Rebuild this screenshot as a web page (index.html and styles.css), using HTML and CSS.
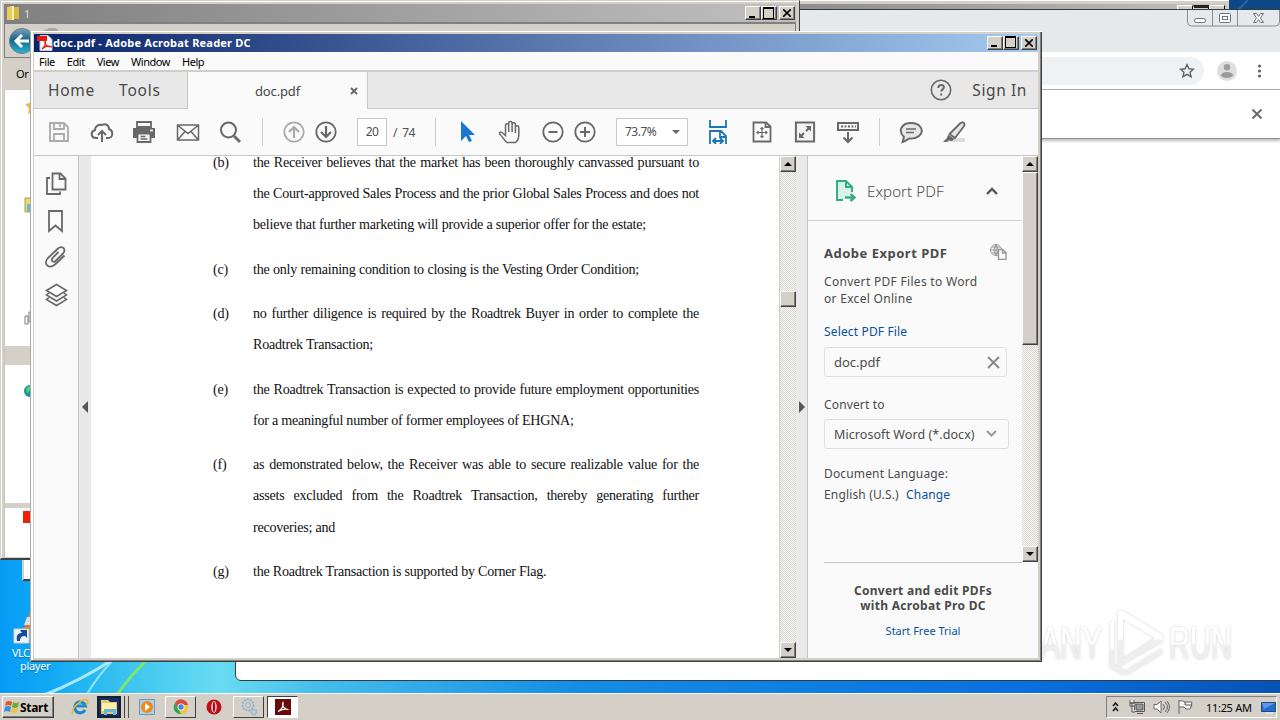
FILE: index.html
```html
<!DOCTYPE html>
<html lang="en">
<head>
<meta charset="utf-8">
<title>doc.pdf - Adobe Acrobat Reader DC</title>
<link rel="stylesheet" href="styles.css">
</head>
<body>
<main class="desktop">
  <svg class="wallpaper" width="1280" height="720" viewBox="0 0 1280 720">
    <defs>
      <linearGradient id="sky"><stop offset="0" stop-color="#069cf6"/><stop offset=".04" stop-color="#12aaf5"/><stop offset=".1" stop-color="#3cc4f0"/><stop offset=".17" stop-color="#68dcf2"/><stop offset=".25" stop-color="#45bdeb"/><stop offset=".45" stop-color="#168ce4"/><stop offset=".8" stop-color="#0870df"/><stop offset="1" stop-color="#0653b5"/></linearGradient>
    </defs>
    <rect width="1280" height="720" fill="url(#sky)"/>
    <path d="M1220 0h60v20h-60z" fill="#0d4785"/><path d="M1234 14l14-14" stroke="#2864a0" stroke-width="2"/>
    <path d="M42 696Q82 680 112 660" fill="none" stroke="#bff2ff" stroke-width="3" opacity=".85"/>
    <path d="M86 696Q96 678 113 660" fill="none" stroke="#a4efff" stroke-width="2" opacity=".8"/>
    <path d="M116 696Q130 676 147 660" fill="none" stroke="#80e862" stroke-width="3"/>
  </svg>

  <section class="small-window"></section>
  <div class="shortcut">
    <svg width="32" height="34" viewBox="0 0 32 34"><path d="M18 0L9 22H32V0z" fill="#c9803c"/><path d="M15 5l-3 8H32V5z" fill="#ddd"/><path d="M2 17h15v14H2z" fill="#eef3f5" stroke="#ccc"/><path d="M5 29c-1-6 1-8 5-8l-2-3h7v8l-2-2c-3 0-5 1-5 5z" fill="#164f99"/></svg>
    <span class="vlc">VLC</span><span class="player">player</span>
  </div>

  <section class="rear-window"><i></i><i></i><i></i></section>
  <section class="browser">
    <header class="browser-top">
      <div class="aero-controls">
        <svg width="93" height="18" viewBox="0 0 93 18" fill="none" stroke="#69737c"><path d="M.5 0v12q0 4 4 4h84q4 0 4-4V0M25.500 0v16M50.500 0v16" stroke="#858d93"/><rect x="7.500" y="8.500" width="11" height="4" rx="2" fill="#fff"/><rect x="32.500" y="3.500" width="11" height="9" rx="1" fill="#fff"/><rect x="35.500" y="6.500" width="5" height="3"/><path d="M66.500 3.500h3l2 3 2-3h3l-3 4.500 3 4.500h-3l-2-3-2 3h-3l3-4.500z" fill="#fff"/></svg>
      </div>
    </header>
    <div class="browser-address"><div class="omnibox"><svg width="16" height="16" viewBox="0 0 16 16"><path d="M8 1.500l1.900 4.300 4.600.4-3.500 3 1.100 4.500L8 11.300l-4.100 2.400L5 9.200l-3.500-3 4.600-.4z" fill="none" stroke="#5f6368" stroke-width="1.400"/></svg></div>
      <svg class="person" width="20" height="20" viewBox="0 0 20 20"><circle cx="10" cy="10" r="10" fill="#dedede"/><circle cx="10" cy="6.300" r="3.200" fill="#9c9c9c"/><ellipse cx="10" cy="14" rx="6" ry="3" fill="#9c9c9c"/></svg>
      <svg width="5" height="16" viewBox="0 0 5 16" fill="#5f6368"><circle cx="2.500" cy="3" r="1.600"/><circle cx="2.500" cy="8" r="1.600"/><circle cx="2.500" cy="13" r="1.600"/></svg>
    </div>
    <div class="infobar"><svg width="12" height="12" viewBox="0 0 12 12"><path d="M1.500 1.500l9 9m0-9l-9 9" stroke="#666" stroke-width="1.800"/></svg></div>
  </section>

  <section class="explorer">
    <header class="explorer-title"><svg width="14" height="16" viewBox="0 0 14 16"><path d="M1 2l5-1v14H1z" fill="#e8ce62"/><path d="M6 1h2v14H6z" fill="#fff2a7"/><path d="M8 2h5v12H8z" fill="#d9b93f"/></svg><span>1</span>
      <div class="controls"><b class="min"></b><b class="max"></b><b class="close"><svg width="8" height="8" viewBox="0 0 8 8"><path d="M0 0l8 8m0-8l-8 8" stroke="#000" stroke-width="1.600"/></svg></b></div>
    </header>
    <div class="explorer-nav"><svg width="52" height="33" viewBox="0 0 52 33"><defs><linearGradient id="nav" x2="0" y2="1"><stop stop-color="#76a7b9"/><stop offset=".45" stop-color="#176487"/><stop offset="1" stop-color="#28b6dd"/></linearGradient></defs><circle cx="46" cy="17" r="13" fill="#a9a59e"/><circle cx="16" cy="17" r="12.500" fill="url(#nav)" stroke="#687f88"/><path d="M23 17H10m6-6l-6 6 6 6" fill="none" stroke="#fff" stroke-width="3"/></svg></div>
    <div class="explorer-command">Or</div>
    <div class="explorer-body">
      <svg width="27" height="465" viewBox="0 0 27 465"><path d="M27 9l-2 4-5 1 4 4-1 6 4-2z" fill="#f2b44a"/><path d="M20 108h7v14h-7z" fill="#ecd971" stroke="#a89d49"/><path d="M22 114h5v7h-5z" fill="#6bb4df"/><path d="M20 226h3v8h-3zM24 222h3v10h-3z" fill="#fff" stroke="#777d88"/><path d="M25 221h2v8h-2z" fill="#35357a"/><path d="M0 256h27v19H0z" fill="#d4d0c8"/><circle cx="25" cy="301" r="6" fill="#168fa4"/><path d="M21 298l4-2v4l-3 4z" fill="#45d56f"/><path d="M0 413h27v5H0z" fill="#d4d0c8"/><path d="M18 421h9v12h-9z" fill="#eb2205"/></svg>
    </div>
  </section>

  <svg class="watermark" width="240" height="80" viewBox="0 0 240 80">
    <defs><linearGradient id="wm" x2="0" y2="1"><stop offset=".5" stop-color="#fff"/><stop offset=".55" stop-color="#ebebeb"/></linearGradient><filter id="soft"><feDropShadow dx="0" dy="0" stdDeviation="1.800" flood-color="#888" flood-opacity=".5"/></filter></defs>
    <g filter="url(#soft)" fill="url(#wm)"><text x="10" y="56" textLength="62" lengthAdjust="spacingAndGlyphs">ANY</text><text x="139" y="56" textLength="63" lengthAdjust="spacingAndGlyphs">RUN</text><path d="M80 20l4-3v45l12 6 35-22q3 3 0 5L98 71q-4 2-8-1l-10-6z"/><path fill-rule="evenodd" d="M88 10q2-4 7-1l36 22q4 4 0 8L90 63l-2-2zM93 16v40l32-21z"/></g>
  </svg>

  <section class="acrobat">
    <header class="acrobat-title"><svg width="17" height="16" viewBox="0 0 17 16"><path d="M4 .5h8l4 4v11H4z" fill="#f4f6fa" stroke="#c5cad4"/><path d="M1 1h10v5H1z" fill="#e21a10"/><path d="M6 14c4-3 4-7 3-8-1 4 3 6 7 6-4-2-7-1-10 2z" fill="none" stroke="#df2519" stroke-width="1.200"/></svg><span>doc.pdf - Adobe Acrobat Reader DC</span>
      <div class="controls"><b class="min"></b><b class="max"></b><b class="close"><svg width="8" height="8" viewBox="0 0 8 8"><path d="M0 0l8 8m0-8l-8 8" stroke="#000" stroke-width="1.600"/></svg></b></div>
    </header>
    <nav class="menu"><span>File</span><span>Edit</span><span>View</span><span>Window</span><span>Help</span></nav>
    <div class="tabs">
      <div class="home"><span>Home</span><span>Tools</span></div>
      <div class="tab"><span>doc.pdf</span><svg width="8" height="8" viewBox="0 0 8 8"><path d="M1 1l6 6m0-6l-6 6" stroke="#666" stroke-width="1.900"/></svg></div>
      <div class="account"><svg width="22" height="22" viewBox="0 0 22 22" fill="none" stroke="#6a6a6a" stroke-width="1.600"><circle cx="11" cy="11" r="9.700"/><path d="M8.300 9q0-3 2.800-3t2.800 2.300c0 2-2.700 2.200-2.700 4.300" stroke-width="2"/><path d="M10.200 14.500h2v2h-2z" fill="#6a6a6a" stroke="none"/></svg><span>Sign In</span></div>
    </div>
    <div class="toolbar">
      <i class="w50"><svg class="pale" viewBox="0 0 24 24"><path d="M3 3h14l4 4v14H3zM7 3v6h10V3M13 4v3M7 21v-7h10v7"/></svg></i>
      <i class="w36"><svg viewBox="0 0 24 24"><path d="M8 18H6c-5 0-6-6-1-8 0-4 4-6 7-5 3-2 7 0 7 4 5 2 4 9-1 9h-2M12 22V11m-4 4l4-4 4 4" stroke-width="2"/></svg></i>
      <i class="w48"><svg viewBox="0 0 24 24"><path d="M5 2h14v5H5z" fill="#fafafa"/><path d="M1 8h22v10H1z" fill="#686868" stroke="none"/><path d="M5.500 13.500h13V22h-13z" fill="#fafafa"/><path d="M8.500 16.500h5M8.500 19h7" stroke-width="1.300"/><path d="M18 10.500h3" stroke="#eee"/></svg></i>
      <i class="w40"><svg viewBox="0 0 24 24"><path d="M1.500 5h21v15h-21zM2 5.500l10 8 10-8M2 19.500l7-8M22 19.500l-7-8" stroke-width="1.500"/></svg></i>
      <i class="w44"><svg viewBox="0 0 24 24"><circle cx="10.500" cy="10" r="7.500" stroke-width="2"/><path d="M16 16l6 6" stroke-width="2.800"/></svg></i>
      <i class="w21 divider"></i>
      <i class="w42"><svg class="pale" viewBox="0 0 24 24"><circle cx="12" cy="12" r="9.700"/><path d="M12 18V7m-5 5l5-5 5 5" stroke-width="2.200"/></svg></i>
      <i class="w22"><svg viewBox="0 0 24 24"><circle cx="12" cy="12" r="9.700"/><path d="M12 6v11m-5-5l5 5 5-5" stroke-width="2.200"/></svg></i>
      <span class="page-box">20</span><span class="pages">/&nbsp; 74</span>
      <i class="w36 divider"></i>
      <i class="w28"><svg viewBox="0 0 24 24"><path d="M6 1v20l5-5 3 6 3-1-3-6h6z" fill="#1976d2" stroke="none"/></svg></i>
      <i class="w58"><svg viewBox="0 0 24 24"><path d="M9 22.500C6 20.500 5 17 2 14.500c-1.500-2 .5-3 2-2l3.500 3V5.500c0-2.500 3.200-2.500 3.200 0V12 3.500c0-2.600 3.400-2.600 3.400 0V12 4.500c0-2.500 3.300-2.500 3.300 0V13 7.500c0-2.300 3.400-2.300 3.400 0V15c0 4-1.500 6-3.300 7.500z" stroke-width="1.500"/></svg></i>
      <i class="w28"><svg viewBox="0 0 24 24"><circle cx="12" cy="12" r="9.700"/><path d="M7.500 12h9" stroke-width="2"/></svg></i>
      <i class="w36"><svg viewBox="0 0 24 24"><circle cx="12" cy="12" r="9.700"/><path d="M7 12h10M12 7v10" stroke-width="2"/></svg></i>
      <span class="zoom-box">73.7%<b></b></span>
      <i class="w60"><svg class="blue" viewBox="0 0 24 24"><path d="M4 0v7h16V0M4 24V11h11l5 5v8M14 11v6h6M7 21h10m-7-3l-3 3 3 3m4-6l3 3-3 3"/></svg></i>
      <i class="w28"><svg viewBox="0 0 24 24"><path d="M3.500 2.500h12.500l4.500 4v15h-17zM15.500 3v4h5" stroke-width="1.800"/><path d="M12 7.500v10M7 12.500h10M10.500 9L12 7.500 13.500 9m-3 7l1.500 1.500 1.500-1.500M8.500 11L7 12.500 8.500 14m7-3l1.500 1.500-1.500 1.500" stroke-width="1.200" stroke-dasharray="none"/></svg></i>
      <i class="w58"><svg viewBox="0 0 24 24"><path d="M2.900 2.500h18.200v19H2.900z" fill="#f3f3f3" stroke-width="2"/><path d="M8 16l3-3m2-2l3-3" stroke-width="2.200"/><path d="M12.500 6H18v5.500zM6 12.500V18h5.500z" fill="#686868" stroke="none"/></svg></i>
      <i class="w28"><svg viewBox="0 0 24 24"><path d="M2 3h20v7H2zM12 12v10m-4.500-4.500L12 22l4.500-4.500" stroke-width="2"/><path d="M5 6.500h15" stroke-dasharray="2 1.500"/></svg></i>
      <i class="w34 divider"></i>
      <i class="w30"><svg viewBox="0 0 24 24"><path d="M3.500 22l1.500-5C-1.500 11 2.500 3 12 3s14 8 8 13c-3 2.500-6 3-10 2.500-2 1.500-4 2.500-6.500 3.500z" fill="#e6e6e6" stroke-width="1.900"/><path d="M7 9h10M7 12.500h8" stroke-width="1.300"/></svg></i>
      <i class="w58"><svg viewBox="0 0 24 24"><path d="M9 18h13v4H6z" fill="#ddd" stroke="none"/><path d="M6.500 14L17.500 3q4-2 4 2.500L12 18z" fill="#e5e5e5"/><path d="M5 14.500l6.500 4.500-2.500 2-3-.5L4 22H0l4-4z" fill="#686868" stroke="none"/></svg></i>
    </div>
    <div class="workspace">
      <aside class="rail">
        <svg viewBox="0 0 24 24"><path d="M8.500 1.500h8l5 5v11h-13zM15.500 2v5h5.500M6 6H3v16h13v-2.500"/></svg>
        <svg viewBox="0 0 24 24"><path d="M5 2h13v20l-6.500-5.500L5 22z"/></svg>
        <svg viewBox="0 0 24 24"><path d="M14.500 7l-6 6c-2 3 1 5 3 3l7.500-7.500c4-4-1-8.500-5-5L4 13c-5.500 6 1 11.500 7 6.500l9.500-9"/></svg>
        <svg viewBox="0 0 24 24"><path d="M2.500 7.500L12.500 1.500l10 6-10 6z" fill="#fff" stroke-width="1.600"/><path d="M5 10l-2.500 2 10 6 10-6-2.500-2M5 14.500l-2.500 2 10 6 10-6-2.500-2" stroke-width="1.600"/></svg>
      </aside>
      <div class="gutter"><b></b></div>
      <article class="document">
        <div class="clause"><span>(b)</span><div><p>the Receiver believes that the market has been thoroughly canvassed pursuant to</p><p>the Court-approved Sales Process and the prior Global Sales Process and does not</p><p class="l393">believe that further marketing will provide a superior offer for the estate;</p></div></div>
        <div class="clause"><span>(c)</span><div><p class="l386">the only remaining condition to closing is the Vesting Order Condition;</p></div></div>
        <div class="clause"><span>(d)</span><div><p>no further diligence is required by the Roadtrek Buyer in order to complete the</p><p class="l120">Roadtrek Transaction;</p></div></div>
        <div class="clause"><span>(e)</span><div><p>the Roadtrek Transaction is expected to provide future employment opportunities</p><p class="l320">for a meaningful number of former employees of EHGNA;</p></div></div>
        <div class="clause"><span>(f)</span><div><p>as demonstrated below, the Receiver was able to secure realizable value for the</p><p>assets excluded from the Roadtrek Transaction, thereby generating further</p><p class="l82">recoveries; and</p></div></div>
        <div class="clause"><span>(g)</span><div><p class="l293">the Roadtrek Transaction is supported by Corner Flag.</p></div></div>
      </article>
      <div class="scroll doc-scroll"><b class="up"></b><b class="thumb"></b><b class="down"></b></div>
      <div class="right-gutter"><b></b></div>
      <aside class="panel">
        <div class="panel-top">
          <div class="panel-main">
            <div class="export-head"><svg width="24" height="24" viewBox="0 0 24 24" fill="none" stroke="#35ad85" stroke-width="2"><path d="M10 21H4V2h9l6 6v5M13 2v6h6" fill="#d9f1e9"/><path d="M12 18.500h9m-3.500-3.500l4 3.500-4 3.500" stroke-width="2.400"/></svg><span>Export PDF</span><svg width="12" height="8" viewBox="0 0 12 8"><path d="M1 7l5-5 5 5" fill="none" stroke="#555" stroke-width="2.400"/></svg></div>
            <div class="export-content">
              <div class="headline"><strong>Adobe Export PDF</strong><svg width="17" height="16" viewBox="0 0 17 16" fill="none" stroke="#999"><circle cx="6" cy="6" r="5.500"/><path d="M0 6h12M6 0v12M2 3h8M2 9h8M6 .5Q2 6 6 11.500M6 .5q4 5.500 0 11"/><path d="M8.500 5.500h4l3.500 3v7H8.500zM12.500 6v3H16" fill="#fafafa" stroke-width="1.400"/></svg></div>
              <p class="copy">Convert PDF Files to Word<br>or Excel Online</p>
              <a>Select PDF File</a>
              <div class="file-box"><span>doc.pdf</span><svg width="13" height="13" viewBox="0 0 13 13"><path d="M1 1l11 11m0-11L1 12" stroke="#8a8a8a" stroke-width="2"/></svg></div>
              <p class="convert">Convert to</p>
              <div class="format"><span>Microsoft Word (*.docx)</span><svg width="11" height="8" viewBox="0 0 11 8"><path d="M1 1l4.500 4.500L10 1" fill="none" stroke="#999" stroke-width="2"/></svg></div>
              <p class="language">Document Language:<br>English (U.S.) <a>Change</a></p>
            </div>
          </div>
          <div class="scroll panel-scroll"><b class="up"></b><b class="thumb"></b><b class="down"></b></div>
        </div>
        <footer><strong>Convert and edit PDFs</strong><strong>with Acrobat Pro DC</strong><a>Start Free Trial</a></footer>
      </aside>
    </div>
  </section>

  <footer class="taskbar">
    <div class="start"><svg width="16" height="16" viewBox="0 0 16 16"><path d="M2 3q3-2 6 0L7 7Q4 5 1 7z" fill="#e05628"/><path d="M9 3q3 2 6 0l-1 5q-3 2-6 0z" fill="#68ad36"/><path d="M1 8q3-2 6 0l-1 5q-3-2-6 0z" fill="#388fda"/><path d="M8 9q3 2 6 0l-1 4q-3 2-6 0z" fill="#f6c12c"/></svg><strong>Start</strong></div>
    <i class="launch ie"><svg width="18" height="18" viewBox="0 0 18 18"><path d="M14 12a5.500 5.500 0 1 1 .5-4H5" fill="none" stroke="#1689d1" stroke-width="3"/><path d="M2 16C-2 12 12-1 16 2q2 2-1 5" fill="none" stroke="#e9b633" stroke-width="1.500"/></svg></i>
    <i class="launch explorer-icon"><svg width="20" height="18" viewBox="0 0 20 18"><path d="M2 4V2h7l2 2h7v12H2z" fill="#e4ca6d"/><path d="M3 5h14v8H3z" fill="#fff0a5"/><path d="M5 17v-6h12v6h-3v-3H8v3z" fill="#61b9dc"/></svg></i><span class="stack"></span>
    <i class="launch media"><svg width="16" height="16" viewBox="0 0 16 16"><path d="M.5.5h15v15H.5z" fill="#a9d3ed" stroke="#649ac4"/><circle cx="8" cy="8" r="6" fill="#f18b16"/><path d="M6 4l5 4-5 4z" fill="#fff"/></svg></i>
    <i class="launch chrome"><svg width="16" height="16" viewBox="0 0 16 16"><circle cx="8" cy="8" r="7" fill="#f5c52c"/><path d="M2 4a7 7 0 0 1 13 2H8L5 9z" fill="#db4b3a"/><path d="M2 4l4 7 2 4C1 15-1 8 2 4z" fill="#32a35b"/><circle cx="8" cy="8" r="3.500" fill="#fff"/><circle cx="8" cy="8" r="2.700" fill="#4585d9"/></svg></i>
    <i class="launch opera"><svg width="16" height="16" viewBox="0 0 16 16"><circle cx="8" cy="8" r="7.500" fill="#bd1119"/><ellipse cx="8" cy="8" rx="2.700" ry="5.800" fill="#eee"/><ellipse cx="8" cy="8" rx="1.300" ry="5" fill="#a50d15"/></svg></i>
    <i class="launch settings"><svg width="18" height="18" viewBox="0 0 18 18" fill="none" stroke="#8eb5ca"><circle cx="8" cy="7" r="5.500" stroke-width="2" stroke-dasharray="2 1"/><circle cx="8" cy="7" r="2.500"/><circle cx="14" cy="14" r="2.500" stroke-width="2" stroke-dasharray="1.500 .7"/></svg></i>
    <i class="launch pdf"><svg width="16" height="16" viewBox="0 0 16 16"><path d="M0 0h16v16H0z" fill="#690b0b"/><path d="M3 12.500c4-2 5.500-6 5-9-2 3 2 7 5.500 7-4-1-7 0-10.500 2z" fill="none" stroke="#fff" stroke-width="1.200"/></svg></i>
    <div class="tray">
      <svg width="7" height="10" viewBox="0 0 7 10"><path d="M1 4l2.500-3L6 4M1 9l2.500-3L6 9" fill="none" stroke="#111" stroke-width="1.500"/></svg>
      <svg class="net" width="16" height="16" viewBox="0 0 16 16" fill="#eee" stroke="#555"><path d="M5.500 3.500h10v9h-10z"/><path d="M7 5h7v6H7z" fill="#999"/><path d="M8 14.500h6M1 1v3h4V1M3 4v9h3M1 4h5v3H1z"/></svg>
      <svg class="sound" width="17" height="16" viewBox="0 0 17 16" fill="none" stroke="#666"><path d="M1 5.500h3L8 2v12l-4-4H1z" fill="#fff"/><path d="M10 5q3 3 0 6M12 3q5 5 0 10M14 2q5 6 0 12"/></svg>
      <svg class="flag" width="17" height="16" viewBox="0 0 17 16"><path d="M2 1v14M2 2q4-1 6 1v3h7l-2 4q-5 1-6-2H2M8 3h7l-1 5" fill="#f6f6f6" stroke="#666"/></svg>
      <span>11:25 AM</span>
      <svg class="monitor" width="15" height="13" viewBox="0 0 15 13"><path d="M.5 1.500h14v9H.5z" fill="#266bce" stroke="#234779"/><path d="M1 2h13L3 8z" fill="#5b9ae9"/><path d="M4 12h8" stroke="#eee"/></svg>
    </div>
  </footer>
</main>
</body>
</html>
```
FILE: styles.css
```css
* { box-sizing: border-box; }
body { margin: 0; font-family: "Noto Sans", sans-serif; }
p { margin: 0; }
svg { display: block; flex: none; }
a { color: #07519b; }
.desktop { position: relative; width: 1280px; height: 720px; overflow: hidden; }
.wallpaper { position: absolute; inset: 0; }
.small-window { position: absolute; left: 22px; top: 540px; width: 200px; height: 41px; background: #fff; border: 2px solid #d4d0c8; border-bottom-color: #404040; }
.shortcut { position: absolute; left: 12px; top: 612px; width: 50px; height: 63px; color: #fff; font-size: 11px; line-height: 13px; text-shadow: 0 1px 1px #0005; white-space: nowrap; }
.shortcut span { display: block; }
.vlc { letter-spacing: -.6px; }
.player { margin-left: 8px; letter-spacing: -.3px; }
.rear-window { position: absolute; left: 790px; top: 0; width: 439px; height: 30px; border-top: 1px solid #fff; background: linear-gradient(90deg,#8d8d8d,#c3c0bb); box-shadow: inset 0 3px #d4d0c8, inset -3px 0 #d4d0c8; display: flex; justify-content: flex-end; padding: 4px 4px; }
.rear-window i { width: 16px; height: 12px; background: #d4d0c8; border: 1px solid #fff; border-right: 1px solid #111; border-bottom: 0; }
.rear-window i:nth-child(2) { border-top: 3px solid #222; }
.browser { position: absolute; left: 235px; top: 9px; width: 1047px; height: 672px; background: #fff; border: 1px solid #343c43; border-radius: 0 0 0 6px; }
.browser-top { height: 42px; background: #e5e9ec; display: flex; justify-content: flex-end; padding-right: 1px; }
.browser-address { height: 38px; border-bottom: 1px solid #ababab; display: flex; align-items: center; }
.omnibox { width: 968px; height: 28px; border-radius: 14px; background: #eff2f5; display: flex; align-items: center; justify-content: flex-end; padding-right: 9px; }
.person { margin: 0 20px 0 13px; }
.infobar { height: 49px; border-bottom: 1px solid #929292; box-shadow: 0 2px 3px #bbb; display: flex; align-items: center; justify-content: flex-end; padding-right: 18px; }
.explorer { position: absolute; left: 0; top: 0; width: 800px; height: 560px; background: #d4d0c8; border: 1px solid #d4d0c8; border-right: 1px solid #404040; border-bottom: 2px solid #404040; box-shadow: inset 1px 1px #fff; padding: 3px 3px 2px; }
.explorer-title { height: 18px; display: flex; align-items: center; background: linear-gradient(90deg,#808080,#c0c0c0); color: #e0dedb; font-size: 11px; padding-left: 2px; }
.explorer-title > span { margin-left: 4px; }
.controls { margin-left: auto; display: flex; padding-right: 1px; }
.controls b { width: 16px; height: 14px; background: #d4d0c8; border: 1px solid #fff; border-right-color: #404040; border-bottom-color: #404040; box-shadow: inset -1px -1px #808080; position: relative; display: flex; align-items: center; justify-content: center; }
.controls .min::after { content: ""; width: 6px; height: 2px; background: #000; margin: 7px 3px 0 0; }
.controls .max::after { content: ""; width: 9px; height: 9px; border: 1px solid #000; border-top-width: 2px; margin: 0 1px 1px 0; }
.controls .close { margin-left: 2px; }
.explorer-nav { height: 36px; border: 1px solid #808080; border-top-width: 2px; overflow: hidden; padding-left: 1px; }
.explorer-command { height: 32px; font-size: 11px; line-height: 32px; padding-left: 12px; letter-spacing: -.4px; }
.explorer-body { height: 467px; background: #fff; border-left: 1px solid #c8c4bc; }
.watermark { position: absolute; left: 1030px; top: 603px; font: 400 46px "Liberation Sans", sans-serif; opacity: .8; }
.acrobat { position: absolute; left: 30px; top: 31px; width: 1012px; height: 631px; background: #d4d0c8; border: solid #fff; border-width: 1px 0 0 1px; border-left-color: #aaa; box-shadow: inset -1px -1px #404040, inset -2px -2px #808080, inset 2px 0 #fff; padding: 2px 4px 3px 3px; }
.acrobat-title { height: 18px; background: linear-gradient(90deg,#0a246a,#a6caf0); color: #fff; display: flex; align-items: center; font-size: 11px; line-height: 16px; font-weight: 700; letter-spacing: .22px; white-space: nowrap; padding: 0 0 1px 2px; }
.menu { height: 20px; display: flex; gap: 12px; padding-left: 5px; line-height: 20px; background: #fafafa; border-bottom: 2px solid #cfcdca; font-size: 11px; letter-spacing: -.45px; }
.tabs { display: flex; height: 37px; background: #e8e8e8; border-bottom: 1px solid #c9c9c9; color: #484848; }
.home { width: 154px; display: flex; gap: 24px; padding: 0 0 0 14px; border-right: 1px solid #c6c6c6; font-size: 15.5px; line-height: 36px; letter-spacing: .75px; }
.tab { width: 180px; height: 37px; background: #fafafa; border-right: 1px solid #c9c9c9; display: flex; align-items: center; justify-content: flex-end; padding-right: 9px; font-size: 13px; letter-spacing: -.15px; gap: 50px; }
.account { margin-left: auto; display: flex; align-items: center; font-size: 15.5px; letter-spacing: .6px; gap: 20px; padding-right: 11px; }
.toolbar { height: 47px; background: #fafafa; border-bottom: 1px solid #c8c8c8; display: flex; align-items: center; color: #505050; font-size: 12px; }
.toolbar i { height: 28px; display: flex; align-items: center; justify-content: center; flex: none; }
.toolbar svg, .rail svg { width: 24px; height: 24px; fill: none; stroke: #686868; stroke-width: 1.8; }
.toolbar .pale { stroke: #aaa; }
.toolbar .blue { stroke: #1976bd; }
.w21 { width: 21px; } .w22 { width: 22px; } .w28 { width: 28px; } .w30 { width: 30px; } .w34 { width: 34px; } .w36 { width: 36px; } .w40 { width: 40px; } .w42 { width: 42px; } .w44 { width: 44px; } .w48 { width: 48px; } .w50 { width: 50px; } .w58 { width: 58px; } .w60 { width: 60px; }
.divider::after { content: ""; width: 1px; height: 28px; background: #ccc; }
.page-box, .zoom-box { height: 28px; background: #fff; border: 1px solid #c8c8c8; line-height: 26px; flex: none; letter-spacing: -.5px; }
.page-box { width: 30px; margin-left: 20px; text-align: center; }
.pages { width: 24px; margin-left: 6px; white-space: nowrap; letter-spacing: -.5px; }
.zoom-box { width: 72px; margin-left: 13px; padding: 0 7px 0 8px; display: flex; justify-content: space-between; align-items: center; }
.zoom-box b { border: 4px solid transparent; border-top-color: #686868; border-bottom: 0; }
.workspace { height: 502px; display: flex; background: #fff; }
.rail { width: 45px; background: #fafafa; border-right: 1px solid #c6c6c6; display: flex; flex-direction: column; align-items: center; padding-top: 16px; gap: 13px; }
.rail svg:nth-child(3) { margin-top: -1px; }
.rail svg:nth-child(4) { margin-top: 1px; }
.gutter { width: 12px; background: #e8e8e8; padding: 245px 3px; }
.gutter b { display: block; border: 6px solid transparent; border-right-color: #555; border-left: 0; }
.document { width: 688px; height: 502px; overflow: hidden; color: #111; font: 14.1px/31.2px "Liberation Serif", serif; letter-spacing: -.24px; }
.clause { display: flex; margin: -9px 0 22.15px 122px; }
.clause + .clause { margin-top: -9px; }
.clause > span { width: 40px; }
.clause p { width: 446px; white-space: nowrap; text-align-last: justify; }
.clause .l393 { width: 393px; } .clause .l386 { width: 386px; } .clause .l120 { width: 120px; } .clause .l320 { width: 320px; } .clause .l82 { width: 82px; } .clause .l293 { width: 293px; }
.scroll { background: repeating-conic-gradient(#fff 0 25%,#d6d2ca 0 50%) 0 0/2px 2px; display: flex; flex-direction: column; }
.scroll b { background: #d4d0c8; border: 1px solid #fff; border-right-color: #404040; border-bottom-color: #404040; box-shadow: inset -1px -1px #808080; height: 16px; display: flex; align-items: center; justify-content: center; flex: none; }
.up::after { content: ""; border: 4px solid transparent; border-top: 0; border-bottom-color: #000; }
.down::after { content: ""; border: 4px solid transparent; border-bottom: 0; border-top-color: #000; }
.scroll .down { margin-top: auto; }
.doc-scroll { width: 17px; border-left: 1px solid #ccc; }
.doc-scroll .thumb { margin-top: 119px; }
.right-gutter { width: 12px; border-right: 1px solid #c4c4c4; background: #e9e9e9; padding: 245px 3px; }
.right-gutter b { display: block; border: 6px solid transparent; border-left-color: #555; border-right: 0; }
.panel { width: 230px; background: #fafafa; color: #4b4b4b; }
.panel-top { height: 407px; display: flex; }
.panel-main { width: 214px; }
.panel-scroll { width: 16px; height: 406px; }
.panel-scroll .thumb { height: 173px; }
.export-head { height: 65px; border-bottom: 1px solid #d0d0d0; display: flex; align-items: center; padding: 5px 24px 0 25px; font-size: 15px; font-weight: 300; }
.export-head span { margin-left: 10px; margin-right: auto; letter-spacing: .1px; }
.export-content { margin-left: 16px; width: 198px; height: 342px; border-bottom: 1px solid #c8c8c8; font-size: 12px; letter-spacing: .15px; }
.headline { display: flex; justify-content: space-between; padding: 23px 15px 0 0; font-size: 13px; line-height: 18px; letter-spacing: .5px; }
.copy { margin-top: 11px; line-height: 17px; white-space: nowrap; letter-spacing: .3px; }
.export-content > a { display: block; margin-top: 16px; line-height: 17px; }
.file-box, .format { height: 30px; border: 1px solid #dfdfdf; border-radius: 3px; display: flex; align-items: center; justify-content: space-between; padding: 0 6px 0 9px; font-size: 13px; white-space: nowrap; letter-spacing: 0; }
.file-box { margin-top: 7px; width: 183px; }
.convert { margin-top: 19px; line-height: 17px; }
.format { width: 185px; margin-top: 6px; padding-right: 11px; font-size: 12.5px; letter-spacing: .07px; }
.language { line-height: 21px; margin-top: 14px; }
.language a { margin-left: 4px; }
.panel footer { padding-top: 20px; display: flex; flex-direction: column; align-items: center; font-size: 12px; line-height: 15px; letter-spacing: .3px; }
.panel footer a { margin-top: 10px; font-size: 11px; letter-spacing: 0; }
.taskbar { position: absolute; left: 0; top: 693px; width: 1280px; height: 27px; background: #d4d0c8; border-top: 1px solid #fff; display: flex; align-items: center; }
.start { width: 52px; height: 22px; margin-left: 2px; display: flex; align-items: center; padding-left: 1px; font-size: 12px; letter-spacing: -.3px; border: 1px solid #fff; border-right-color: #404040; border-bottom-color: #404040; box-shadow: inset -1px -1px #808080; }
.launch { height: 22px; display: flex; align-items: center; justify-content: center; }
.ie { width: 20px; margin-left: 16px; }
.explorer-icon { width: 24px; margin-left: 7px; border: 2px solid #17202d; background: #172e68; }
.stack { width: 4px; height: 22px; border: solid #404040; border-width: 0 1px 0 0; box-shadow: 3px 0 #d4d0c8, 4px 0 #555; }
.media { width: 20px; margin-left: 12px; }
.chrome, .settings { width: 31px; border: 1px solid #fff; border-right-color: #404040; border-bottom-color: #404040; }
.chrome { margin-left: 8px; }
.opera { width: 20px; margin-left: 8px; }
.settings { margin-left: 9px; }
.pdf { width: 31px; margin-left: 3px; background: #fff; border: 1px solid #fff; border-top-color: #404040; border-left-color: #404040; }
.tray { width: 171px; height: 22px; margin-left: auto; margin-right: 3px; border: 1px solid #fff; border-left-color: #808080; border-top-color: #808080; display: flex; align-items: center; font-size: 11px; padding-left: 5px; white-space: nowrap; }
.net { margin-left: 10px; } .sound { margin-left: 8px; } .flag { margin-left: 7px; }
.tray span { margin-left: 12px; letter-spacing: -.3px; }
.monitor { margin-left: auto; }
```
